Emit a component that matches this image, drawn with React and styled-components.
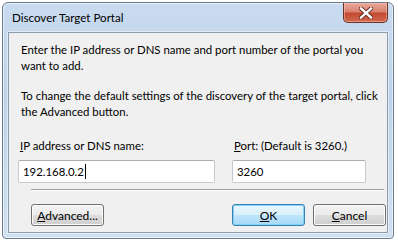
import styled, { createGlobalStyle } from "styled-components";

const Global = createGlobalStyle`
  body {
    margin: 0;
    background: #fff;
    font-family: Lato, "Liberation Sans", Arial, sans-serif;
  }
`;

const Window = styled.div`
  margin: 2px 0 0 2px;
  width: 392px;
  height: 237px;
  box-sizing: border-box;
  border: 1px solid #6b7a8b;
  border-radius: 6px 6px 4px 4px;
  background: linear-gradient(180deg, #c9dbef 0%, #bed3ea 40%, #cfe0f1 100%);
  display: flex;
  flex-direction: column;
  padding: 0 5px 5px;
  box-shadow: inset 0 0 0 1px rgba(255, 255, 255, 0.6);
`;

const TitleBar = styled.div`
  height: 29px;
  flex: none;
  display: flex;
  justify-content: space-between;
  align-items: flex-start;
`;

const Title = styled.div`
  padding: 8px 0 0 4px;
  font-size: 11.6px;
  color: #000;
`;

const CloseBtn = styled.div`
  width: 43px;
  height: 19px;
  border: 1px solid #6a3328;
  border-top: none;
  border-radius: 0 0 5px 5px;
  background: linear-gradient(180deg, #e9aa9b 0%, #d98270 45%, #c44a32 55%, #cf6a4f 100%);
  display: flex;
  align-items: center;
  justify-content: center;
  box-shadow: inset 0 0 0 1px rgba(255, 200, 190, 0.5);
`;

const Client = styled.div`
  flex: 1;
  min-height: 0;
  overflow: hidden;
  background: #f0f0f0;
  border: 1px solid #8c9bad;
  box-shadow: 0 0 0 1px rgba(255, 255, 255, 0.5);
  display: flex;
  flex-direction: column;
  padding: 9px 11px 0 9px;
  color: #000;
  font-size: 11.4px;
`;

const Para = styled.p`
  margin: 0 0 ${(p) => p.$mb || 0}px 3px;
  line-height: 16px;
  white-space: nowrap;
`;

const Fields = styled.div`
  display: flex;
  gap: 17px;
  margin-top: 2px;
`;

const Field = styled.div`
  display: flex;
  flex-direction: column;
  width: ${(p) => p.$w}px;
`;

const Label = styled.label`
  line-height: 16px;
  margin: 0 0 6px 2px;
  white-space: nowrap;
`;

const Input = styled.div`
  height: 23px;
  box-sizing: border-box;
  border: 1px solid #c5cad1;
  border-top-color: #abadb3;
  border-radius: 2px;
  background: #fff;
  display: flex;
  align-items: center;
  padding-left: 4px;
`;

const Caret = styled.span`
  display: inline-block;
  width: 1px;
  height: 15px;
  background: #000;
  margin-left: 1px;
`;

const Separator = styled.div`
  flex: none;
  height: 1px;
  background: #a0a0a0;
  border-bottom: 1px solid #fff;
  margin: 6px 0 0 13px;
  width: 353px;
`;

const ButtonRow = styled.div`
  display: flex;
  margin: 13px 0 0 13px;
  width: 355px;
`;

const Spacer = styled.div`
  flex: 1;
`;

const Button = styled.button`
  width: 73px;
  height: 22px;
  margin-left: ${(p) => p.$ml || 0}px;
  font-family: Lato, "Liberation Sans", Arial, sans-serif;
  font-size: 12px;
  color: #000;
  padding: 0;
  border-radius: 3px;
  border: 1px solid ${(p) => (p.$primary ? "#3c7fb1" : "#707070")};
  background: ${(p) =>
    p.$primary
      ? "linear-gradient(180deg, #eaf6fd 0%, #d9f0fc 50%, #bee6fd 51%, #a7d9f5 100%)"
      : "linear-gradient(180deg, #f2f2f2 0%, #ebebeb 50%, #dddddd 51%, #cfcfcf 100%)"};
  box-shadow: inset 0 0 0 1px ${(p) => (p.$primary ? "#7fd3f7" : "#fcfcfc")};
`;

function App() {
  return (
    <>
      <Global />
      <Window>
        <TitleBar>
          <Title>Discover Target Portal</Title>
          <CloseBtn>
            <svg width="14" height="12" viewBox="0 0 14 12">
              <path
                d="M2 1.5 L12 10.5 M12 1.5 L2 10.5"
                stroke="#5a2418"
                strokeWidth="4.2"
                strokeLinecap="square"
              />
              <path
                d="M2 1.5 L12 10.5 M12 1.5 L2 10.5"
                stroke="#fff"
                strokeWidth="2.4"
                strokeLinecap="square"
              />
            </svg>
          </CloseBtn>
        </TitleBar>
        <Client>
          <Para $mb={14}>
            Enter the IP address or DNS name and port number of the portal you
            <br />
            want to add.
          </Para>
          <Para $mb={16}>
            To change the default settings of the discovery of the target portal, click
            <br />
            the Advanced button.
          </Para>
          <Fields>
            <Field $w={197}>
              <Label>
                <u>I</u>P address or DNS name:
              </Label>
              <Input>
                192.168.0.2
                <Caret />
              </Input>
            </Field>
            <Field $w={134}>
              <Label>
                <u>P</u>ort: (Default is 3260.)
              </Label>
              <Input>3260</Input>
            </Field>
          </Fields>
          <Separator />
          <ButtonRow>
            <Button>
              <u>A</u>dvanced...
            </Button>
            <Spacer />
            <Button $primary>
              <u>O</u>K
            </Button>
            <Button $ml={8}>
              <u>C</u>ancel
            </Button>
          </ButtonRow>
        </Client>
      </Window>
    </>
  );
}

export default App;
